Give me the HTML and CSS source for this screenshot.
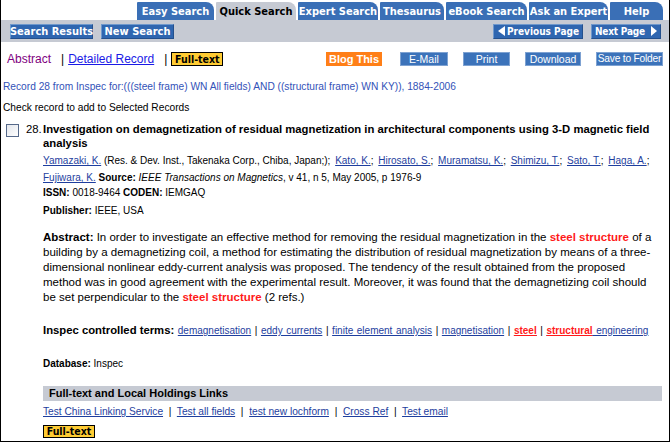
FILE: index.html
```html
<!DOCTYPE html>
<html>
<head>
<meta charset="utf-8">
<link rel="stylesheet" href="styles.css">
</head>
<body>
<div class="page">
  <div class="tabs">
    <span class="tab w-easy">Easy Search</span>
    <span class="tab active w-quick">Quick Search</span>
    <span class="tab w-expert">Expert Search</span>
    <span class="tab w-thes">Thesaurus</span>
    <span class="tab w-ebook">eBook Search</span>
    <span class="tab w-ask">Ask an Expert</span>
    <span class="tab w-help">Help</span>
  </div>
  <div class="toolbar">
    <div class="tb-group">
      <span class="btn b-results">Search Results</span>
      <span class="btn b-new">New Search</span>
    </div>
    <div class="tb-group">
      <span class="btn b-prev"><svg class="tri" width="7" height="10" viewBox="0 0 7 10"><path d="M7 0V10L0 5Z" fill="#fff"/></svg><span>Previous Page</span></span>
      <span class="btn b-next"><span>Next Page</span><svg class="tri" width="6" height="10" viewBox="0 0 6 10"><path d="M0 0V10L6 5Z" fill="#fff"/></svg></span>
    </div>
  </div>
  <div class="actions">
    <div class="views">
      <span class="visited">Abstract</span>
      <span class="sep">|</span>
      <a class="link" href="#">Detailed Record</a>
      <span class="sep">|</span>
      <span class="fulltext">Full-text</span>
    </div>
    <div class="tools">
      <span class="blog">Blog This</span>
      <span class="abtn a-email">E-Mail</span>
      <span class="abtn a-print">Print</span>
      <span class="abtn a-download">Download</span>
      <span class="abtn a-save">Save to Folder</span>
    </div>
  </div>
  <div class="recline">Record 28 from Inspec for:(((steel frame) WN All fields) AND ((structural frame) WN KY)), 1884-2006</div>
  <div class="checkline">Check record to add to Selected Records</div>
  <div class="record">
    <span class="cb"></span>
    <span class="num">28.</span>
    <div class="rbody">
      <div class="title">Investigation on demagnetization of residual magnetization in architectural components using 3-D magnetic field analysis</div>
      <div class="authors"><a class="alink" href="#">Yamazaki, K.</a> (Res. &amp; Dev. Inst., Takenaka Corp., Chiba, Japan;); <a class="alink gap" href="#">Kato, K.</a>; <a class="alink gap" href="#">Hirosato, S.</a>; <a class="alink gap" href="#">Muramatsu, K.</a>; <a class="alink gap" href="#">Shimizu, T.</a>; <a class="alink gap" href="#">Sato, T.</a>; <a class="alink gap" href="#">Haga, A.</a>; <a class="alink" href="#">Fujiwara, K.</a> <b>Source:</b> <i>IEEE Transactions on Magnetics</i>, v 41, n 5, May 2005, p 1976-9</div>
      <div class="issn"><b>ISSN:</b> 0018-9464 <b>CODEN:</b> IEMGAQ</div>
      <div class="publisher"><b>Publisher:</b> IEEE, USA</div>
      <div class="abstract"><b>Abstract:</b> In order to investigate an effective method for removing the residual magnetization in the <span class="hl">steel structure</span> of a building by a demagnetizing coil, a method for estimating the distribution of residual magnetization by means of a three-dimensional nonlinear eddy-current analysis was proposed. The tendency of the result obtained from the proposed method was in good agreement with the experimental result. Moreover, it was found that the demagnetizing coil should be set perpendicular to the <span class="hl">steel structure</span> (2 refs.)</div>
      <div class="terms"><b>Inspec controlled terms:</b> <a class="tlink" href="#">demagnetisation</a> | <a class="tlink" href="#">eddy currents</a> | <a class="tlink" href="#">finite element analysis</a> | <a class="tlink" href="#">magnetisation</a> | <a class="tlink" href="#"><span class="hl">steel</span></a> | <a class="tlink" href="#"><span class="hl">structural</span> engineering</a></div>
      <div class="database"><b>Database:</b> Inspec</div>
      <div class="holdings">Full-text and Local Holdings Links</div>
      <div class="hlinks"><a class="flink" href="#">Test China Linking Service</a> &nbsp;|&nbsp; <a class="flink" href="#">Test all fields</a> &nbsp;|&nbsp; <a class="flink" href="#">test new lochform</a> &nbsp;|&nbsp; <a class="flink" href="#">Cross Ref</a> &nbsp;|&nbsp; <a class="flink" href="#">Test email</a></div>
      <div class="ftrow"><span class="fulltext small">Full-text</span></div>
    </div>
  </div>
</div>
</body>
</html>
```

FILE: styles.css
```css
html, body {
  margin: 0;
  padding: 0;
  background: #fff;
}
.page {
  width: 670px;
  height: 442px;
  box-sizing: border-box;
  border: 1px solid #000;
  border-top: none;
  overflow: hidden;
  font-family: "Liberation Sans", Arial, sans-serif;
  font-size: 10px;
  color: #000;
}
.tabs {
  display: flex;
  justify-content: flex-end;
  gap: 2px;
  padding: 2px 6px 0 0;
  height: 18px;
}
.tab {
  display: flex;
  align-items: center;
  justify-content: center;
  box-sizing: border-box;
  background: #3a6fb6;
  color: #fff;
  font-family: "DejaVu Sans Condensed", "DejaVu Sans", Verdana, sans-serif;
  font-weight: bold;
  font-size: 11px;
  border-top-right-radius: 8px;
  border-top-left-radius: 1px;
  white-space: nowrap;
}
.tab.active {
  background: #c6cad3;
  color: #000;
}
.w-easy { width: 77px; }
.w-quick { width: 80px; }
.w-expert { width: 80px; }
.w-thes { width: 64px; }
.w-ebook { width: 81px; }
.w-ask { width: 79px; }
.w-help { width: 53px; }
.toolbar {
  height: 22px;
  background: #c6cad3;
  display: flex;
  justify-content: space-between;
  align-items: center;
  padding: 0 8px 0 9px;
}
.tb-group {
  display: flex;
  gap: 8px;
}
.btn {
  display: flex;
  align-items: center;
  justify-content: space-between;
  height: 15px;
  box-sizing: border-box;
  padding: 0 3px;
  background: #2f66b0;
  border: 1px solid #6f98cc;
  border-right-color: #24508c;
  border-bottom-color: #24508c;
  color: #fff;
  font-family: "DejaVu Sans Condensed", "DejaVu Sans", Verdana, sans-serif;
  font-weight: bold;
  font-size: 11px;
  white-space: nowrap;
}
.b-results { width: 83px; justify-content: center; }
.b-new { width: 73px; justify-content: center; }
.b-prev { width: 90px; padding: 0 3px 0 4px; font-size: 10px; }
.b-next { width: 70px; padding: 0 3px 0 3px; font-size: 10px; letter-spacing: -0.2px; }
.tri {
  display: block;
  flex-shrink: 0;
}
.actions {
  margin-top: 10px;
  height: 14px;
  display: flex;
  justify-content: space-between;
  align-items: center;
  padding: 0 6px 0 6px;
}
.views {
  display: flex;
  align-items: center;
  font-size: 12px;
}
.visited {
  color: #800080;
}
.sep {
  margin: 0 4px 0 10px;
  color: #000;
}
.link {
  color: #1a1ae6;
  text-decoration: underline;
}
.fulltext {
  display: inline-block;
  width: 52px;
  height: 14px;
  line-height: 12px;
  box-sizing: border-box;
  text-align: center;
  background: #ffcc33;
  border: 1px solid #000;
  font-family: "DejaVu Sans Condensed", "DejaVu Sans", Verdana, sans-serif;
  font-weight: bold;
  font-size: 10.5px;
  color: #000;
}
.fulltext.small {
  height: 13px;
  line-height: 11px;
}
.tools {
  display: flex;
  align-items: center;
  gap: 15px;
}
.blog {
  height: 14px;
  line-height: 14px;
  width: 56px;
  text-align: center;
  background: #ff7f17;
  color: #fff;
  font-weight: bold;
  font-size: 11px;
  margin-right: 3px;
}
.abtn {
  height: 14px;
  line-height: 12px;
  box-sizing: border-box;
  text-align: center;
  background: #3c73ba;
  border: 1px solid #7ea2d2;
  color: #fff;
  font-size: 10.5px;
  white-space: nowrap;
}
.a-email { width: 48px; }
.a-print { width: 47px; }
.a-download { width: 56px; }
.a-save { width: 67px; font-size: 10.2px; letter-spacing: -0.2px; }
.recline {
  margin-top: 14px;
  padding-left: 2px;
  line-height: 14px;
  color: #3352b8;
  font-size: 10.2px;
}
.checkline {
  margin-top: 7px;
  padding-left: 2px;
  line-height: 14px;
  font-size: 10.2px;
}
.record {
  margin-top: 7px;
  display: grid;
  grid-template-columns: 20px 17px 1fr;
  padding: 0 7px 0 5px;
}
.cb {
  width: 13px;
  height: 13px;
  box-sizing: border-box;
  margin-top: 2px;
  border: 1px solid #56698a;
  background: linear-gradient(135deg, #e3e6ec, #ffffff);
}
.num {
  font-size: 11.3px;
  line-height: 14px;
}
.title {
  font-weight: bold;
  font-size: 11.3px;
  line-height: 14px;
}
.authors {
  margin-top: 2px;
  line-height: 17px;
}
.alink, .tlink {
  color: #1e3e9e;
  text-decoration: underline;
}
.alink.gap {
  margin-left: 2px;
}
.issn {
  margin-top: 1px;
  line-height: 12px;
}
.publisher {
  margin-top: 5px;
  line-height: 14px;
}
.abstract {
  margin-top: 12px;
  line-height: 15px;
  font-size: 11.5px;
}
.hl {
  color: #ff1a1a;
  font-weight: bold;
}
.tlink .hl {
  text-decoration: underline;
}
.terms {
  margin-top: 18px;
  line-height: 14px;
  word-spacing: 0.8px;
}
.terms b {
  font-size: 11.3px;
  word-spacing: 0;
}
.database {
  margin-top: 19px;
  line-height: 14px;
}
.holdings {
  margin-top: 15px;
  height: 15px;
  line-height: 15px;
  background: #c6cad3;
  padding-left: 6px;
  font-weight: bold;
  font-size: 11px;
}
.hlinks {
  margin-top: 4px;
  line-height: 14px;
  font-size: 10.2px;
}
.flink {
  color: #1e3e9e;
  text-decoration: underline;
}
.ftrow {
  margin-top: 6px;
  display: flex;
}
```
